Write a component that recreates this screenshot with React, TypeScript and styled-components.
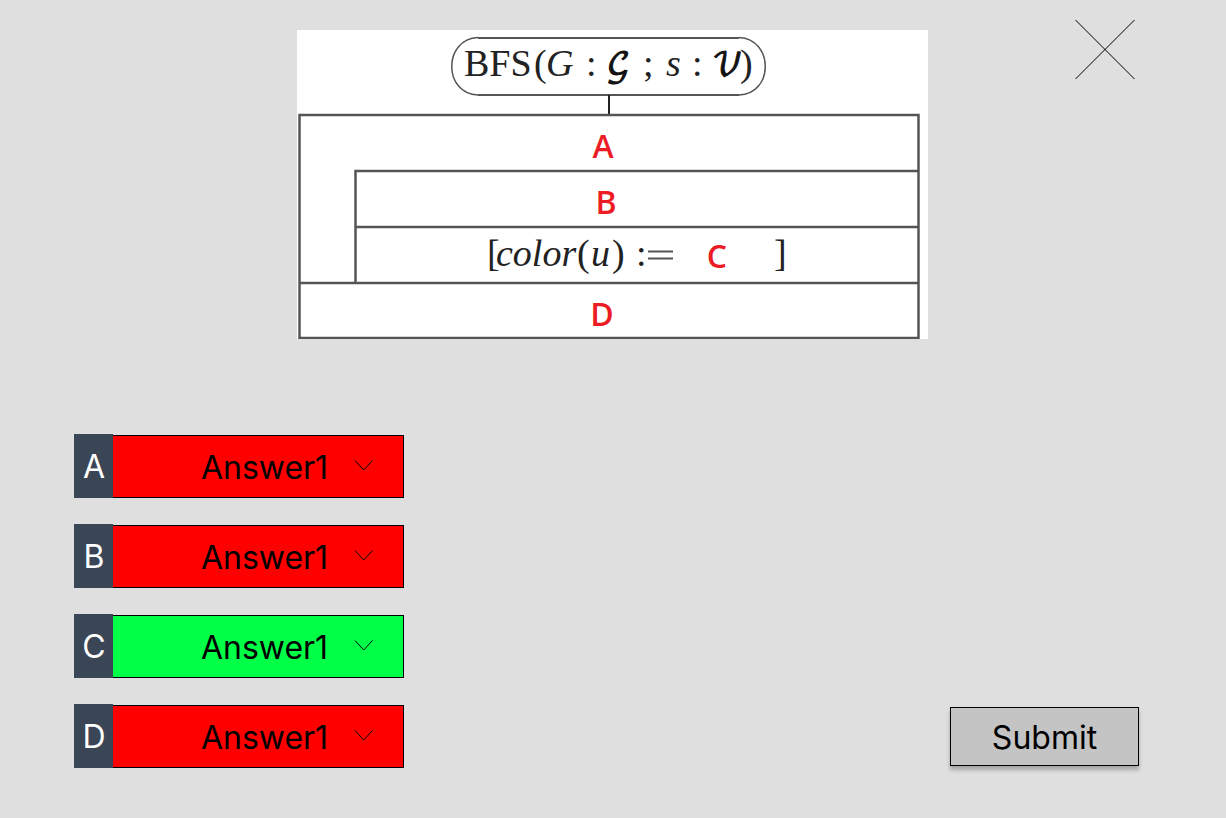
import React from "react";
import styled, { createGlobalStyle } from "styled-components";

const GlobalStyle = createGlobalStyle`
  *, *::before, *::after { box-sizing: border-box; }
  body {
    margin: 0;
    background: #dfdfdf;
    color: #000;
    font-family: Inter, "Liberation Sans", sans-serif;
  }
`;

const Page = styled.main`
  display: flex;
  flex-direction: column;
  gap: 95px;
  padding-bottom: 50px;
`;

const Header = styled.header`
  display: grid;
  grid-template-columns: 1fr minmax(0, 631px) 1fr;
  align-items: start;
  padding-right: 1px;
`;

const Diagram = styled.svg`
  grid-column: 2;
  display: block;
  width: 100%;
  height: auto;
  margin-top: 30px;
  background: #fff;
`;

const Formula = styled.text<{ $italic?: boolean }>`
  font-family: "Liberation Serif", serif;
  font-size: 38px;
  font-style: ${(p) => (p.$italic ? "italic" : "normal")};
  fill: #222;
`;

const Script = styled.text`
  font-family: "DejaVu Math TeX Gyre", "DejaVu Serif", serif;
  font-size: 32px;
  fill: #111;
  stroke: #111;
  stroke-width: 1px;
`;

const Blank = styled.text`
  font-family: "Open Sans", sans-serif;
  font-size: 32px;
  font-weight: 600;
  fill: #ed1c24;
  text-anchor: middle;
`;

const CloseButton = styled.button`
  justify-self: end;
  width: 60px;
  height: 60px;
  margin: 19px 90px 0 0;
  padding: 0;
  border: 0;
  background: none;
  cursor: pointer;

  svg { display: block; }
`;

const AnswerForm = styled.form`
  display: flex;
  flex-wrap: wrap;
  justify-content: space-between;
  align-items: flex-end;
  padding: 0 87px 0 74px;
`;

const Answers = styled.div`
  display: flex;
  flex-direction: column;
  gap: 26px;
  width: 330px;
`;

const Row = styled.div`
  display: flex;
  align-items: flex-end;
`;

const Letter = styled.label`
  width: 39px;
  height: 64px;
  padding-left: 1px;
  background: #3a4555;
  color: #fff;
  font-size: 32px;
  line-height: 66px;
  text-align: center;
`;

const SelectBox = styled.div`
  position: relative;
  flex: 1;

  svg {
    position: absolute;
    top: 24px;
    right: 30px;
    pointer-events: none;
  }
`;

const Select = styled.select<{ $correct: boolean }>`
  appearance: none;
  display: block;
  width: 100%;
  height: 63px;
  margin: 0;
  padding: 2px 0 0 13px;
  border: 1px solid #000;
  border-left: 0;
  border-radius: 0;
  background: ${(p) => (p.$correct ? "#00ff47" : "#ff0000")};
  color: #000;
  font: inherit;
  font-size: 32px;
  text-align: center;
  text-align-last: center;
`;

const SubmitButton = styled.button`
  width: 189px;
  height: 59px;
  margin-bottom: 2px;
  padding: 2px 0 0;
  border: 1px solid #000;
  background: #c4c4c4;
  box-shadow: 0 4px 4px rgba(0, 0, 0, 0.25);
  color: #000;
  font: inherit;
  font-size: 32px;
  cursor: pointer;
`;

const questions = [
  { letter: "A", correct: false },
  { letter: "B", correct: false },
  { letter: "C", correct: true },
  { letter: "D", correct: false },
];

function Structogram() {
  return (
    <Diagram viewBox="0 0 631 309" role="img" aria-label="BFS structogram">
      <g fill="none" stroke="#555" strokeWidth="2">
        <path d="M181 8H442M181 65H442" />
        <path d="M181 7.5C146 9 146 64 181 65M442 7.5C477 9 477 64 442 65" strokeWidth="1.5" />
        <path d="M312 65V85" stroke="#222" />
        <path d="M2.5 309V85H621.5V309" strokeWidth="2.5" />
        <path d="M58.5 253V141H621M58.5 197H621M2 253H621M2 308H621" strokeWidth="2.5" />
      </g>
      <Formula x="167" y="46">BFS</Formula>
      <Formula x="237" y="46">(</Formula>
      <Formula x="249" y="46" $italic>G</Formula>
      <Formula x="289" y="46">:</Formula>
      <Script x="309" y="45">𝒢</Script>
      <Formula x="346" y="46">;</Formula>
      <Formula x="369" y="46" $italic>s</Formula>
      <Formula x="395" y="46">:</Formula>
      <Script x="415" y="45">𝒱</Script>
      <Formula x="443" y="46">)</Formula>
      <Formula x="190" y="236">[</Formula>
      <Formula x="199" y="236" $italic>color</Formula>
      <Formula x="280" y="236">(</Formula>
      <Formula x="294" y="236" $italic>u</Formula>
      <Formula x="315" y="236">)</Formula>
      <Formula x="339" y="236">:</Formula>
      <path d="M351 221.500H376M351 228.500H376" stroke="#555" strokeWidth="2" />
      <Formula x="477" y="236">]</Formula>
      <Blank x="306" y="128">A</Blank>
      <Blank x="309" y="184">B</Blank>
      <Blank x="420" y="238">C</Blank>
      <Blank x="305" y="296">D</Blank>
    </Diagram>
  );
}

export default function App() {
  return (
    <>
      <GlobalStyle />
      <Page>
        <Header>
          <Structogram />
          <CloseButton type="button" aria-label="Close">
            <svg width="60" height="60" viewBox="0 0 60 60" stroke="#000" fill="none">
              <path d="M0.500 1L59.500 60M59.500 1L0.500 60" />
            </svg>
          </CloseButton>
        </Header>
        <AnswerForm onSubmit={(e: React.FormEvent) => e.preventDefault()}>
          <Answers>
            {questions.map(({ letter, correct }) => (
              <Row key={letter}>
                <Letter htmlFor={`answer-${letter}`}>{letter}</Letter>
                <SelectBox>
                  <Select id={`answer-${letter}`} $correct={correct}>
                    <option>Answer1</option>
                  </Select>
                  <svg width="20" height="13" viewBox="0 0 20 13" fill="none" stroke="#000">
                    <path d="M1 1.500L9.700 11L18.500 1.500" />
                  </svg>
                </SelectBox>
              </Row>
            ))}
          </Answers>
          <SubmitButton type="submit">Submit</SubmitButton>
        </AnswerForm>
      </Page>
    </>
  );
}
